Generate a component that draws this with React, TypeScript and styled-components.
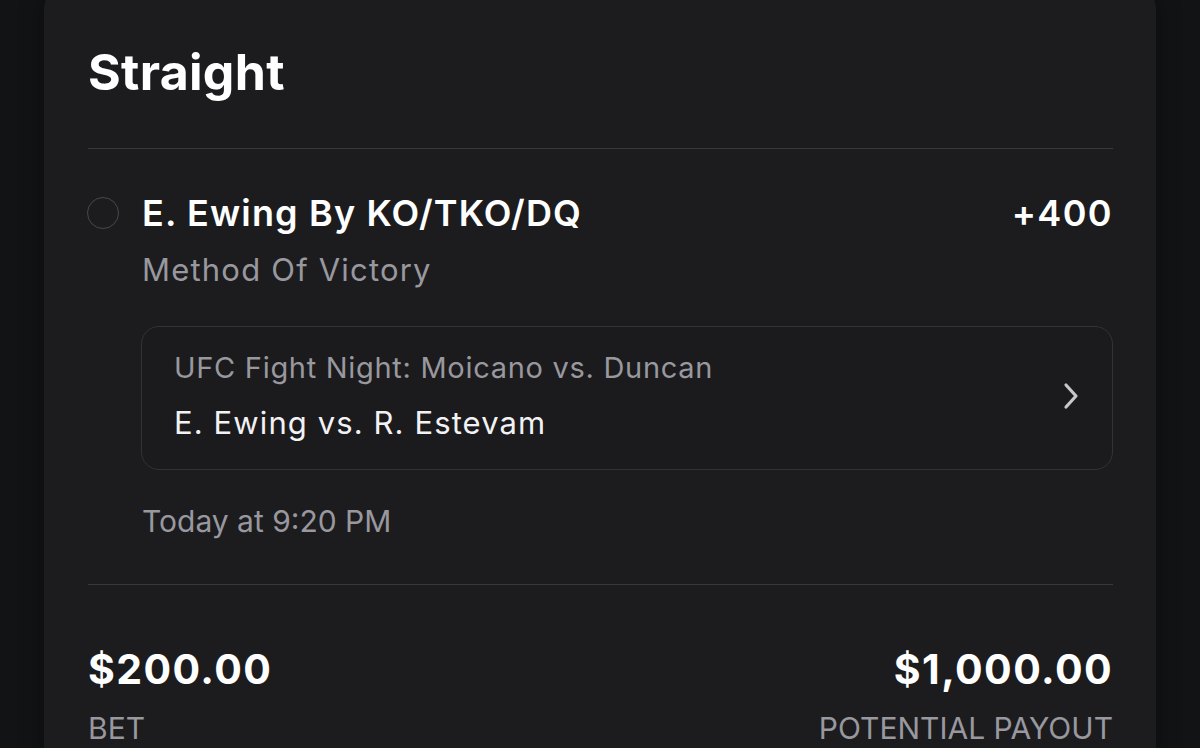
import React from 'react';
import styled, {createGlobalStyle} from 'styled-components';

const GlobalStyle = createGlobalStyle`
    html, body {
        margin: 0;
        padding: 0;
        background: #121315;
    }
    body {
        font-family: Inter, "Noto Sans", "Liberation Sans", sans-serif;
        -webkit-font-smoothing: antialiased;
    }
`

const Page = styled.div`
    height: 748px;
    padding: 0 44px;
    overflow: hidden;
    background: #121315;
`

const Card = styled.section`
    margin-top: -10px;
    padding: 0 43px 40px 44px;
    background: #1c1c1e;
    border-radius: 18px;
    box-shadow: 0 0 24px rgba(0, 0, 0, 0.35);
    color: #ffffff;
`

const Header = styled.div`
    padding: 52px 0 46px;
`

const Title = styled.h1`
    margin: 0;
    font-size: 50px;
    line-height: 60px;
    font-weight: 700;
    letter-spacing: 0.3px;
`

const Divider = styled.hr`
    margin: 0;
    border: none;
    height: 1px;
    background: #38383b;
`

const Selection = styled.div`
    padding: 44px 0 45px;
    display: grid;
    grid-template-columns: 32px 1fr;
    column-gap: 22px;
`

const Radio = styled.span`
    width: 30px;
    height: 30px;
    margin-top: 4px;
    margin-left: -1px;
    border-radius: 50%;
    border: 1.5px solid #48484b;
`

const Details = styled.div`
    display: flex;
    flex-direction: column;
    min-width: 0;
`

const Headline = styled.div`
    display: flex;
    justify-content: space-between;
    align-items: center;
`

const Strong = styled.span`
    font-size: 36px;
    line-height: 40px;
    font-weight: 600;
    letter-spacing: 1.15px;
    color: #ffffff;
`

const Odds = styled(Strong)`
    letter-spacing: 1.4px;
`

const Muted = styled.div<{ $gap?: number; $size?: number; $spacing?: number }>`
    margin-top: ${p => p.$gap ?? 0}px;
    font-size: ${p => p.$size ?? 30}px;
    line-height: 36px;
    letter-spacing: ${p => p.$spacing ?? 0}px;
    color: #98989e;
`

const EventBox = styled.div`
    margin: 38px 0 0 -1px;
    padding: 23px 32px 28px 32px;
    display: flex;
    align-items: center;
    justify-content: space-between;
    border: 1.5px solid #333336;
    border-radius: 18px;
    background: #1b1b1d;
`

const EventText = styled.div`
    display: flex;
    flex-direction: column;
    gap: 19px;
`

const Matchup = styled.div`
    font-size: 31px;
    line-height: 36px;
    letter-spacing: 1.1px;
    color: #f2f2f4;
`

const Totals = styled.div`
    padding-top: 59px;
    display: flex;
    justify-content: space-between;
`

const Total = styled.div<{ $align: 'left' | 'right' }>`
    display: flex;
    flex-direction: column;
    align-items: ${p => (p.$align === 'right' ? 'flex-end' : 'flex-start')};
`

const Amount = styled.div`
    font-size: 41px;
    line-height: 50px;
    font-weight: 700;
    letter-spacing: 1.4px;
`

const Caption = styled.div`
    margin-top: 17px;
    font-size: 30px;
    line-height: 34px;
    color: #98989e;
    text-transform: uppercase;
`

const Chevron = () => (
    <svg width="18" height="28" viewBox="0 0 18 28" fill="none">
        <path d="M4 3 L14 14 L4 25" stroke="#c7c7cc" strokeWidth="3.2" strokeLinecap="round" strokeLinejoin="round"/>
    </svg>
)

const App = () => {
    return (
        <>
            <GlobalStyle/>
            <Page>
                <Card>
                    <Header>
                        <Title>Straight</Title>
                    </Header>
                    <Divider/>
                    <Selection>
                        <Radio/>
                        <Details>
                            <Headline>
                                <Strong>E. Ewing By KO/TKO/DQ</Strong>
                                <Odds>+400</Odds>
                            </Headline>
                            <Muted $gap={19} $size={31} $spacing={1.2}>Method Of Victory</Muted>
                            <EventBox>
                                <EventText>
                                    <Muted $size={29} $spacing={0.7}>UFC Fight Night: Moicano vs. Duncan</Muted>
                                    <Matchup>E. Ewing vs. R. Estevam</Matchup>
                                </EventText>
                                <Chevron/>
                            </EventBox>
                            <Muted $gap={33}>Today at 9:20 PM</Muted>
                        </Details>
                    </Selection>
                    <Divider/>
                    <Totals>
                        <Total $align="left">
                            <Amount>$200.00</Amount>
                            <Caption>Bet</Caption>
                        </Total>
                        <Total $align="right">
                            <Amount>$1,000.00</Amount>
                            <Caption>Potential Payout</Caption>
                        </Total>
                    </Totals>
                </Card>
            </Page>
        </>
    )
}

export default App;
